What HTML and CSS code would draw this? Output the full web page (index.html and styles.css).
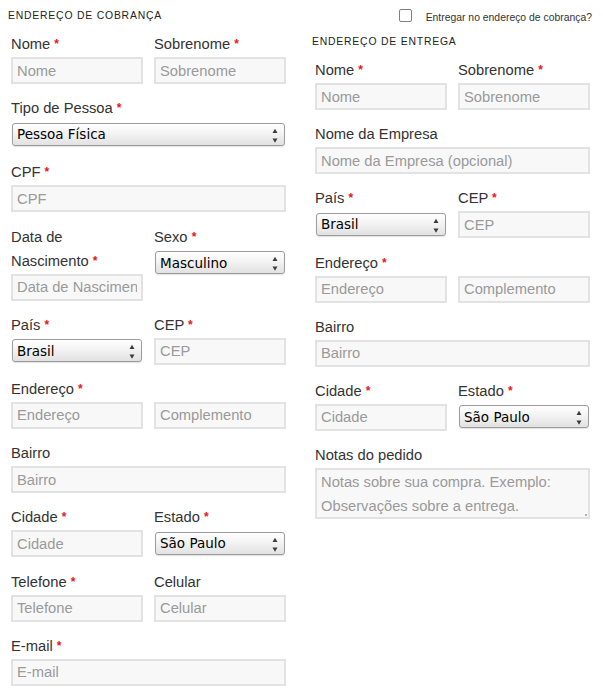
FILE: index.html
```html
<!DOCTYPE html>
<html lang="pt-BR">
<head>
<meta charset="utf-8">
<title>Checkout</title>
<link rel="stylesheet" href="styles.css">
</head>
<body>
<div class="page">
  <section class="col">
    <h3 class="heading">Endereço de cobrança</h3>
    <div class="fields">
      <div class="row half">
        <div class="field"><label>Nome <abbr>*</abbr></label><input class="input" placeholder="Nome"></div>
        <div class="field"><label>Sobrenome <abbr>*</abbr></label><input class="input" placeholder="Sobrenome"></div>
      </div>
      <div class="row">
        <div class="field"><label>Tipo de Pessoa <abbr>*</abbr></label>
          <div class="select"><select><option>Pessoa Física</option></select><svg class="arrows" width="6" height="23" viewBox="0 0 6 23"><path d="M0.5 10L3 5.8L5.5 10Z M0.5 15.6L3 19.8L5.5 15.6Z"/></svg></div>
        </div>
      </div>
      <div class="row">
        <div class="field"><label>CPF <abbr>*</abbr></label><input class="input" placeholder="CPF"></div>
      </div>
      <div class="row half">
        <div class="field"><label>Data de Nascimento <abbr>*</abbr></label><input class="input" placeholder="Data de Nascimento"></div>
        <div class="field"><label>Sexo <abbr>*</abbr></label>
          <div class="select"><select><option>Masculino</option></select><svg class="arrows" width="6" height="23" viewBox="0 0 6 23"><path d="M0.5 10L3 5.8L5.5 10Z M0.5 15.6L3 19.8L5.5 15.6Z"/></svg></div>
        </div>
      </div>
      <div class="row half">
        <div class="field"><label>País <abbr>*</abbr></label>
          <div class="select"><select><option>Brasil</option></select><svg class="arrows" width="6" height="23" viewBox="0 0 6 23"><path d="M0.5 10L3 5.8L5.5 10Z M0.5 15.6L3 19.8L5.5 15.6Z"/></svg></div>
        </div>
        <div class="field"><label>CEP <abbr>*</abbr></label><input class="input" placeholder="CEP"></div>
      </div>
      <div class="row">
        <div class="field"><label>Endereço <abbr>*</abbr></label>
          <div class="pair"><input class="input" placeholder="Endereço"><input class="input" placeholder="Complemento"></div>
        </div>
      </div>
      <div class="row">
        <div class="field"><label>Bairro</label><input class="input" placeholder="Bairro"></div>
      </div>
      <div class="row half">
        <div class="field"><label>Cidade <abbr>*</abbr></label><input class="input" placeholder="Cidade"></div>
        <div class="field"><label>Estado <abbr>*</abbr></label>
          <div class="select"><select><option>São Paulo</option></select><svg class="arrows" width="6" height="23" viewBox="0 0 6 23"><path d="M0.5 10L3 5.8L5.5 10Z M0.5 15.6L3 19.8L5.5 15.6Z"/></svg></div>
        </div>
      </div>
      <div class="row half">
        <div class="field"><label>Telefone <abbr>*</abbr></label><input class="input" placeholder="Telefone"></div>
        <div class="field"><label>Celular</label><input class="input" placeholder="Celular"></div>
      </div>
      <div class="row">
        <div class="field"><label>E-mail <abbr>*</abbr></label><input class="input" placeholder="E-mail"></div>
      </div>
    </div>
  </section>

  <section class="col">
    <div class="ship-toggle">
      <input type="checkbox" class="check" id="same">
      <label for="same">Entregar no endereço de cobrança?</label>
    </div>
    <h3 class="heading">Endereço de entrega</h3>
    <div class="fields">
      <div class="row half">
        <div class="field"><label>Nome <abbr>*</abbr></label><input class="input" placeholder="Nome"></div>
        <div class="field"><label>Sobrenome <abbr>*</abbr></label><input class="input" placeholder="Sobrenome"></div>
      </div>
      <div class="row">
        <div class="field"><label>Nome da Empresa</label><input class="input" placeholder="Nome da Empresa (opcional)"></div>
      </div>
      <div class="row half">
        <div class="field"><label>País <abbr>*</abbr></label>
          <div class="select"><select><option>Brasil</option></select><svg class="arrows" width="6" height="23" viewBox="0 0 6 23"><path d="M0.5 10L3 5.8L5.5 10Z M0.5 15.6L3 19.8L5.5 15.6Z"/></svg></div>
        </div>
        <div class="field"><label>CEP <abbr>*</abbr></label><input class="input" placeholder="CEP"></div>
      </div>
      <div class="row">
        <div class="field"><label>Endereço <abbr>*</abbr></label>
          <div class="pair"><input class="input" placeholder="Endereço"><input class="input" placeholder="Complemento"></div>
        </div>
      </div>
      <div class="row">
        <div class="field"><label>Bairro</label><input class="input" placeholder="Bairro"></div>
      </div>
      <div class="row half">
        <div class="field"><label>Cidade <abbr>*</abbr></label><input class="input" placeholder="Cidade"></div>
        <div class="field"><label>Estado <abbr>*</abbr></label>
          <div class="select"><select><option>São Paulo</option></select><svg class="arrows" width="6" height="23" viewBox="0 0 6 23"><path d="M0.5 10L3 5.8L5.5 10Z M0.5 15.6L3 19.8L5.5 15.6Z"/></svg></div>
        </div>
      </div>
      <div class="row">
        <div class="field"><label>Notas do pedido</label>
          <div class="notes-wrap"><textarea class="input notes" placeholder="Notas sobre sua compra. Exemplo: Observações sobre a entrega."></textarea></div>
        </div>
      </div>
    </div>
  </section>
</div>
</body>
</html>
```

FILE: styles.css
```css
html, body {
  margin: 0;
  padding: 0;
  background: #fff;
}

body {
  font-family: "Liberation Sans", Arial, sans-serif;
  font-size: 14.72px;
  color: #333;
}

.page {
  display: flex;
  gap: 23px;
  padding: 8px 10px 0 8px;
}

.col {
  width: 281px;
  flex: none;
  display: flex;
  flex-direction: column;
}

.heading {
  margin: 0 0 8px;
  font-size: 10.4px;
  font-weight: normal;
  line-height: 16px;
  letter-spacing: 0.8px;
  text-transform: uppercase;
  color: #222;
}

.ship-toggle {
  display: flex;
  align-items: center;
  justify-content: flex-end;
  gap: 14px;
  height: 18px;
  margin: 0 1px 8px 0;
  font-size: 10.4px;
  color: #333;
}

.check {
  appearance: none;
  -webkit-appearance: none;
  width: 13px;
  height: 13px;
  margin: 0 0 3px;
  border: 1px solid #808080;
  border-radius: 2px;
  background: #fff;
}

.fields {
  padding: 0 3px;
}

.row {
  display: grid;
  grid-template-columns: 1fr;
  column-gap: 11px;
  margin-bottom: 12.2px;
  align-items: start;
}

.row.half {
  grid-template-columns: 1fr 1fr;
}

.field label {
  display: block;
  height: auto;
  line-height: 24px;
  margin-bottom: 1px;
  color: #333;
}

abbr {
  position: relative;
  top: -1px;
  color: #e8141b;
  text-decoration: none;
  font-weight: bold;
  font-size: 12px;
  line-height: 0;
}

.input {
  display: block;
  box-sizing: border-box;
  width: 100%;
  height: 27px;
  margin: 0;
  padding: 0 4px;
  border: 2px solid #e2e2e2;
  border-radius: 0;
  background: #f8f8f8;
  font-family: "Liberation Sans", Arial, sans-serif;
  font-size: 14.72px;
  color: #333;
  outline: none;
}

.input::placeholder {
  color: #9a9a9a;
  opacity: 1;
}

.pair {
  display: grid;
  grid-template-columns: 1fr 1fr;
  column-gap: 11px;
}

.notes-wrap {
  position: relative;
}

.notes-wrap::after {
  content: "";
  position: absolute;
  right: 3px;
  bottom: 3px;
  width: 2px;
  height: 2px;
  background: #b0b0b0;
}

.notes {
  height: 51px;
  padding: 0 4px;
  line-height: 24.3px;
  resize: none;
  overflow: hidden;
}

.select {
  position: relative;
  box-sizing: border-box;
  height: 27px;
  padding: 1.5px 1px 0;
}

.select select {
  appearance: none;
  -webkit-appearance: none;
  display: block;
  box-sizing: border-box;
  width: 100%;
  height: 23px;
  margin: 0;
  padding: 0 20px 0 4px;
  border: 1px solid #9c9c9c;
  border-radius: 3px;
  background: linear-gradient(#ffffff, #f3f3f3 45%, #e2e2e2);
  box-shadow: 0 1px 1px rgba(0, 0, 0, 0.12);
  font-family: "DejaVu Sans", sans-serif;
  font-size: 13.5px;
  color: #000;
  outline: none;
}

.arrows {
  position: absolute;
  top: 1.5px;
  right: 8px;
  fill: #3c3c3c;
  pointer-events: none;
}
```
